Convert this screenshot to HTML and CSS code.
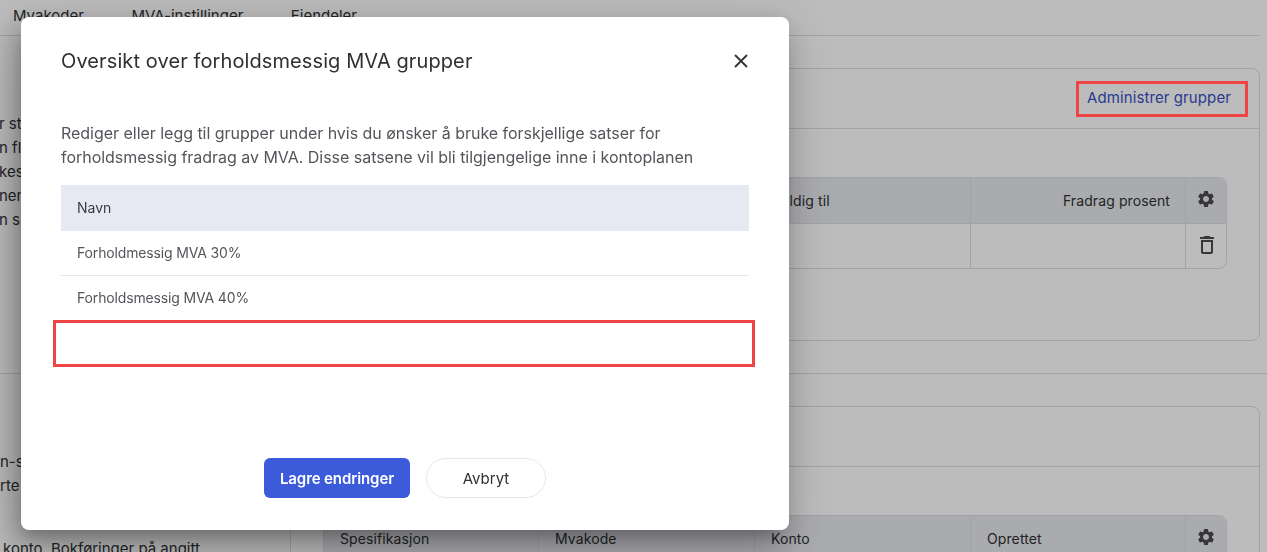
FILE: index.html
```html
<!DOCTYPE html>
<html lang="no">
<head>
    <meta charset="UTF-8">
    <meta name="viewport" content="width=device-width, initial-scale=1.0">
    <title>Mva-innstillinger</title>
    <link rel="stylesheet" href="styles.css">
</head>
<body>
    <svg class="icon-defs" aria-hidden="true">
        <symbol id="icon-gear" viewBox="0 0 24 24"><path d="M19.14 12.94c.04-.3.06-.61.06-.94 0-.32-.02-.64-.07-.94l2.03-1.58c.18-.14.23-.41.12-.61l-1.92-3.32c-.12-.22-.37-.29-.59-.22l-2.39.96c-.5-.38-1.03-.7-1.62-.94l-.36-2.54c-.04-.24-.24-.41-.48-.41h-3.84c-.24 0-.43.17-.47.41l-.36 2.54c-.59.24-1.13.57-1.62.94l-2.39-.96c-.22-.08-.47 0-.59.22L2.74 8.87c-.12.21-.08.47.12.61l2.03 1.58c-.05.3-.09.63-.09.94s.02.64.07.94l-2.03 1.58c-.18.14-.23.41-.12.61l1.92 3.32c.12.22.37.29.59.22l2.39-.96c.5.38 1.03.7 1.62.94l.36 2.54c.05.24.24.41.48.41h3.84c.24 0 .44-.17.47-.41l.36-2.54c.59-.24 1.13-.56 1.62-.94l2.39.96c.22.08.47 0 .59-.22l1.92-3.32c.12-.22.07-.47-.12-.61l-2.01-1.58zM12 15.6c-1.98 0-3.6-1.62-3.6-3.6s1.62-3.6 3.6-3.6 3.6 1.62 3.6 3.6-1.62 3.6-3.6 3.6z"/></symbol>
        <symbol id="icon-trash" viewBox="0 0 24 24"><path d="M6 19c0 1.1.9 2 2 2h8c1.1 0 2-.9 2-2V7H6v12zM8 9h8v10H8V9zm7.5-5l-1-1h-5l-1 1H5v2h14V4h-3.5z"/></symbol>
    </svg>

    <div class="page">
        <nav class="tabs">
            <a href="#" class="tab">Mvakoder</a>
            <a href="#" class="tab">MVA-instillinger</a>
            <a href="#" class="tab">Eiendeler</a>
        </nav>

        <section class="settings-row first-row">
            <div class="intro">
                <p>r store</p>
                <p>n flere</p>
                <p>kes</p>
                <p>nen</p>
                <p>n slik</p>
            </div>
            <div class="card">
                <div class="card-head">
                    <a href="#" class="manage-link">Administrer grupper</a>
                </div>
                <div class="card-body">
                    <table class="data-table">
                        <thead>
                            <tr>
                                <th>Navn</th>
                                <th>Gyldig fra</th>
                                <th>Gyldig til</th>
                                <th class="num">Fradrag prosent</th>
                                <th class="icon-cell"><svg class="icon gear"><use href="#icon-gear"></use></svg></th>
                            </tr>
                        </thead>
                        <tbody>
                            <tr>
                                <td></td>
                                <td></td>
                                <td></td>
                                <td></td>
                                <td class="icon-cell"><svg class="icon trash"><use href="#icon-trash"></use></svg></td>
                            </tr>
                        </tbody>
                    </table>
                </div>
            </div>
        </section>

        <section class="settings-row second-row">
            <div class="intro">
                <p>n-spesifikasjon</p>
                <p>rte</p>
                <p class="spaced">konto. Bokføringer på angitt</p>
            </div>
            <div class="card">
                <div class="card-head"></div>
                <div class="card-body">
                    <table class="data-table">
                        <thead>
                            <tr>
                                <th>Spesifikasjon</th>
                                <th>Mvakode</th>
                                <th>Konto</th>
                                <th>Oprettet</th>
                                <th class="icon-cell"><svg class="icon gear"><use href="#icon-gear"></use></svg></th>
                            </tr>
                        </thead>
                    </table>
                </div>
            </div>
        </section>
    </div>

    <div class="backdrop">
        <div class="modal">
            <div class="modal-head">
                <h2>Oversikt over forholdsmessig MVA grupper</h2>
                <button class="close-btn" aria-label="Lukk">
                    <svg viewBox="0 0 16 16"><path d="M2 2l12 12M14 2L2 14"/></svg>
                </button>
            </div>
            <p class="modal-text">Rediger eller legg til grupper under hvis du ønsker å bruke forskjellige satser for forholdsmessig fradrag av MVA. Disse satsene vil bli tilgjengelige inne i kontoplanen</p>
            <div class="group-list">
                <div class="group-head">Navn</div>
                <div class="group-row">Forholdmessig MVA 30%</div>
                <div class="group-row">Forholdsmessig MVA 40%</div>
                <div class="group-new"></div>
            </div>
            <div class="modal-actions">
                <button class="btn-primary">Lagre endringer</button>
                <button class="btn-ghost">Avbryt</button>
            </div>
        </div>
        <!-- rød markering ligger over det dempede innholdet -->
        <div class="marker"></div>
    </div>
</body>
</html>
```

FILE: styles.css
```css
:root {
    --text-color: #2f3033;
    --muted-text: #53555a;
    --border-color: #e5e7ee;
    --line-color: #dcdde3;
    --head-color: #e6e9f2;
    --primary-color: #3b5bdb;
    --marker-color: #ef4444;
}

* {
    box-sizing: border-box;
    margin: 0;
    padding: 0;
}

html, body {
    height: 100%;
    overflow: hidden;
}

body {
    font-family: 'Inter', sans-serif;
    background-color: #fff;
    color: var(--text-color);
    font-size: 14px;
}

.icon-defs {
    display: none;
}

.page {
    width: 1267px;
    height: 552px;
    overflow: hidden;
}

.tabs {
    display: flex;
    gap: 47.5px;
    height: 36px;
    width: 1260px;
    padding: 7px 0 0 13px;
    border-bottom: 1px solid var(--line-color);
    font-size: 15px;
    line-height: 18px;
}

.tab {
    color: var(--text-color);
    text-decoration: none;
}

.settings-row {
    display: flex;
    padding-right: 7px;
}

.first-row {
    padding-top: 32px;
    padding-bottom: 32px;
    border-bottom: 1px solid var(--line-color);
}

.second-row {
    padding-top: 32px;
}

.intro {
    width: 290px;
    flex-shrink: 0;
    font-size: 15px;
    line-height: 24px;
    white-space: nowrap;
    padding-top: 44px;
}

.first-row .intro p {
    margin-left: -1px;
}

.spaced {
    margin-top: 39px;
    padding-left: 3px;
}

.card {
    flex: 1;
    border: 1px solid var(--line-color);
    border-radius: 8px;
}

.first-row .card {
    height: 273px;
}

.second-row .card {
    height: 300px;
}

.card-head {
    display: flex;
    justify-content: flex-end;
    align-items: center;
    height: 60px;
    padding: 0 28px 2px 0;
    border-bottom: 1px solid var(--line-color);
}

.manage-link {
    color: #3a4fc4;
    text-decoration: none;
    font-size: 15px;
    line-height: 18px;
    letter-spacing: 0.1px;
}

.card-body {
    padding: 48px 32px 0;
}

.data-table {
    width: 904px;
    border-collapse: separate;
    border-spacing: 0;
    table-layout: fixed;
    border: 1px solid var(--line-color);
    border-radius: 8px;
    letter-spacing: 0.1px;
}

.data-table th {
    height: 45px;
    padding: 0 16px;
    text-align: left;
    font-weight: 400;
    background-color: #e7e8ee;
    border-right: 1px solid var(--line-color);
}

.data-table th:first-child {
    width: 215px;
    border-top-left-radius: 8px;
}

.data-table th:nth-child(2),
.data-table th:nth-child(3) {
    width: 216px;
}

.data-table th:last-child {
    width: 40px;
    padding: 0;
    border-right: none;
    border-top-right-radius: 8px;
}

.data-table th.num {
    text-align: right;
    padding-right: 15px;
}

.data-table td {
    height: 45px;
    border-top: 1px solid var(--line-color);
    border-right: 1px solid var(--line-color);
}

.data-table td:first-child,
.data-table td:nth-child(2) {
    border-right: none;
}

.data-table td:last-child {
    padding-left: 2px;
    border-right: none;
}

.icon {
    display: block;
    margin: 0 auto;
    fill: #4a4a4a;
}

.gear {
    width: 20px;
    height: 20px;
    margin-top: -3px;
}

.trash {
    width: 24px;
    height: 24px;
    margin-top: -2px;
}

.backdrop {
    position: fixed;
    inset: 0;
    background-color: rgba(0, 5, 0, 0.265);
}

.modal {
    position: absolute;
    left: 21px;
    top: 17px;
    width: 768px;
    height: 513px;
    padding: 0 40px;
    background-color: #fff;
    border-radius: 8px;
    box-shadow:
        -4px 24px 38px 3px rgba(0, 0, 0, 0.14),
        -4px 9px 46px 8px rgba(0, 0, 0, 0.1),
        -6px 8px 22px 2px rgba(0, 0, 0, 0.13),
        -3px 11px 15px -7px rgba(0, 0, 0, 0.2);
}

.marker {
    position: absolute;
    left: 1076px;
    top: 81px;
    width: 172px;
    height: 36px;
    border: 3px solid var(--marker-color);
}

.modal-head {
    display: flex;
    align-items: center;
    justify-content: space-between;
    height: 88px;
}

.modal-head h2 {
    font-size: 20px;
    font-weight: 400;
    letter-spacing: 0.1px;
    color: var(--text-color);
}

.close-btn {
    width: 16px;
    height: 16px;
    background: none;
    border: none;
    cursor: pointer;
}

.close-btn svg {
    display: block;
    width: 16px;
    height: 16px;
    stroke: #333;
    stroke-width: 1.8;
    fill: none;
}

.modal-text {
    margin-top: 16px;
    font-size: 16px;
    line-height: 24px;
    letter-spacing: -0.03px;
    color: var(--muted-text);
}

.group-list {
    margin-top: 16px;
    font-size: 14px;
    color: var(--muted-text);
}

.group-head {
    display: flex;
    align-items: center;
    height: 46px;
    padding: 0 16px 2px;
    background-color: var(--head-color);
    color: #3a3c40;
}

.group-row {
    display: flex;
    align-items: center;
    height: 45px;
    padding: 0 16px 2px;
    letter-spacing: -0.15px;
    border-bottom: 1px solid var(--border-color);
}

.group-row:last-of-type {
    border-bottom: none;
}

.group-new {
    height: 47px;
    margin: -1px -6px 0 -8px;
    border: 3px solid var(--marker-color);
}

.modal-actions {
    display: flex;
    justify-content: center;
    gap: 16px;
    margin-top: 91px;
}

.btn-primary {
    width: 146px;
    height: 40px;
    background-color: var(--primary-color);
    color: #fff;
    border: none;
    border-radius: 6px;
    font-family: inherit;
    font-size: 15px;
    font-weight: 600;
    letter-spacing: -0.1px;
    cursor: pointer;
}

.btn-ghost {
    width: 120px;
    height: 40px;
    background-color: #fff;
    color: var(--text-color);
    border: 1px solid var(--border-color);
    border-radius: 20px;
    font-family: inherit;
    font-size: 15px;
    cursor: pointer;
}
```
